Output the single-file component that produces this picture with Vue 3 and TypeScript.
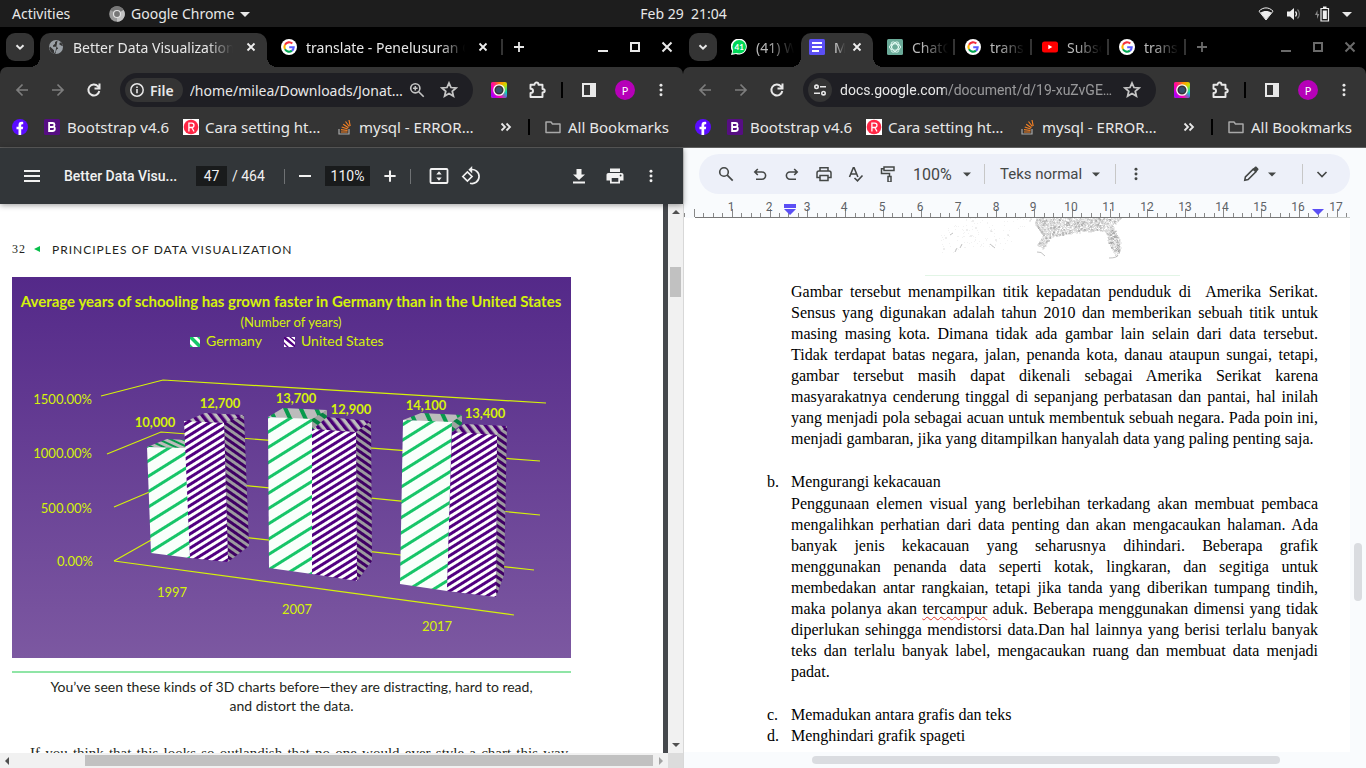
<script setup lang="ts">
interface Tab {
  title: string
  icon: string
  width: number
  kind: 'active' | 'first' | 'plain'
  closable?: boolean
  divider?: boolean
}
interface BrowserWindow {
  id: string
  focused: boolean
  tabs: Tab[]
  chip: string
  url: string
}

const windows: BrowserWindow[] = [
  {
    id: 'pdf',
    focused: true,
    chip: 'File',
    url: '/home/milea/Downloads/Jonat…',
    tabs: [
      { title: 'Better Data Visualizations', icon: 'globe', width: 227, kind: 'active', closable: true },
      { title: 'translate - Penelusuran Google', icon: 'google', width: 236, kind: 'first', closable: true, divider: true },
    ],
  },
  {
    id: 'docs',
    focused: false,
    chip: '',
    url: 'docs.google.com/document/d/19-xuZvGE…',
    tabs: [
      { title: '(41) WhatsApp', icon: 'whatsapp', width: 84, kind: 'first' },
      { title: 'Makalah', icon: 'gdocs', width: 72, kind: 'active', closable: true },
      { title: 'ChatGPT', icon: 'chatgpt', width: 82, kind: 'first', divider: true },
      { title: 'translate', icon: 'google', width: 77, kind: 'plain', divider: true },
      { title: 'Subscriptions', icon: 'youtube', width: 77, kind: 'plain', divider: true },
      { title: 'translate', icon: 'google', width: 77, kind: 'plain', divider: true },
    ],
  },
]

const bookmarks = [
  { id: 'fb', icon: 'facebook', label: '' },
  { id: 'bs', icon: 'bootstrap', label: 'Bootstrap v4.6' },
  { id: 'cara', icon: 'redr', label: 'Cara setting ht…' },
  { id: 'so', icon: 'stack', label: 'mysql - ERROR…' },
]

const gridLines = [
  '101,396 163,380 546,403',
  '107,454 161,432 540,461',
  '114,507 180,479 540,515',
  '114,561 160,535 180,530 534,570',
  '114,561 514,615',
]

const faces = [
  { p: '147,447 167,439 187,440 187,449', f: 'green-flat' },
  { p: '147,447 186,448 190,558 151,553', f: 'green-front' },
  { p: '184,422 205,413 244,415 224,424', f: 'purple-top' },
  { p: '224,423 244,415 249,546 228,562', f: 'purple-side' },
  { p: '184,421 224,423 228,562 190,558', f: 'purple-front' },
  { p: '268,417 283,408 327,410 312,420', f: 'green-top' },
  { p: '268,417 312,419 312,574 269,568', f: 'green-front' },
  { p: '312,430 326,417 371,421 356,433', f: 'purple-top' },
  { p: '312,419 327,410 327,417 312,430', f: 'green-side' },
  { p: '356,432 371,421 372,561 357,581', f: 'purple-side' },
  { p: '312,429 356,432 357,581 312,574', f: 'purple-front' },
  { p: '403,420 421,413 462,415 452,423', f: 'green-top' },
  { p: '403,420 452,422 447,591 400,584', f: 'green-front' },
  { p: '452,433 464,424 507,426 497,436', f: 'purple-top' },
  { p: '452,422 462,415 462,424 452,432', f: 'green-side' },
  { p: '497,434 507,426 504,575 496,597', f: 'purple-side' },
  { p: '452,432 497,435 496,597 447,591', f: 'purple-front' },
]

const axisLabels = [
  { x: 92, y: 404, t: '1500.00%' },
  { x: 92, y: 458, t: '1000.00%' },
  { x: 92, y: 513, t: '500.00%' },
  { x: 93, y: 566, t: '0.00%' },
]
const yearLabels = [
  { x: 172, y: 597, t: '1997' },
  { x: 297, y: 614, t: '2007' },
  { x: 437, y: 631, t: '2017' },
]
const valueLabels = [
  { x: 155, y: 427, t: '10,000' },
  { x: 220, y: 408, t: '12,700' },
  { x: 296, y: 403, t: '13,700' },
  { x: 351, y: 414, t: '12,900' },
  { x: 426, y: 410, t: '14,100' },
  { x: 485, y: 418, t: '13,400' },
]

const unit = 37.8
const rulerTicks = Array.from({ length: 72 }, (_, i) => {
  const x = Math.round(-9 + (i * unit) / 4)
  return { x, top: i % 4 === 2 ? 9 : 13 }
}).filter((t) => t.x >= 0)
const rulerNumbers = Array.from({ length: 17 }, (_, i) => ({ n: i + 1, x: Math.round(47 + i * unit) }))

/* Population dot map: dots are scattered inside a few outlines, in layers that darken where they meet. */
type Pt = [number, number]
let seed = 11
function rand(): number {
  seed = (seed + 0x6d2b79f5) | 0
  let t = Math.imul(seed ^ (seed >>> 15), 1 | seed)
  t = (t + Math.imul(t ^ (t >>> 7), 61 | t)) ^ t
  return ((t ^ (t >>> 14)) >>> 0) / 4294967296
}
function inside(x: number, y: number, poly: Pt[]): boolean {
  let hit = false
  for (let i = 0, j = poly.length - 1; i < poly.length; j = i++) {
    const [xi, yi] = poly[i]
    const [xj, yj] = poly[j]
    if (yi > y !== yj > y && x < ((xj - xi) * (y - yi)) / (yj - yi) + xi) hit = !hit
  }
  return hit
}
function scatter(poly: Pt[], count: number, size: number): string {
  let d = ''
  for (let i = 0; i < count; i++) {
    const x = rand() * 255
    const y = rand() * 44
    if (inside(x, y, poly)) d += `M${Math.floor(x)} ${Math.floor(y)}h${size}v${size}h-${size}z`
  }
  return d
}
const gulf: Pt[] = [[112, 0], [198, 0], [188, 7], [195, 22], [196, 34], [191, 38], [184, 26], [180, 13], [155, 14], [140, 17], [126, 19], [119, 31], [112, 28], [118, 18], [110, 6]]
const florida: Pt[] = [[184, 8], [190, 10], [196, 26], [195, 36], [190, 32], [184, 22]]
const west: Pt[] = [[35, 0], [110, 0], [100, 10], [80, 34], [50, 28], [15, 40], [10, 22]]
const dots = [
  { d: scatter(gulf, 14000, 1), o: 0.09 },
  { d: scatter(gulf, 3000, 2), o: 0.08 },
  { d: scatter(gulf, 4000, 1), o: 0.1 },
  { d: scatter(gulf, 500, 2), o: 0.16 },
  { d: scatter(florida, 2500, 2), o: 0.08 },
  { d: scatter(florida, 2000, 1), o: 0.14 },
  { d: scatter(west, 500, 1), o: 0.06 },
  { d: scatter(west, 50, 2), o: 0.08 },
]
</script>

<template>
  <div class="desktop">
    <svg class="sprite" aria-hidden="true">
      <defs>
        <linearGradient id="rainbow" x1="0" y1="0" x2="1" y2="1">
          <stop offset="0" stop-color="#ff2a3c" /><stop offset=".35" stop-color="#ff9a00" />
          <stop offset=".55" stop-color="#c8e000" /><stop offset=".8" stop-color="#00d8c0" /><stop offset="1" stop-color="#2a80ff" />
        </linearGradient>
        <linearGradient id="magenta" x1="0" y1=".8" x2=".7" y2=".3">
          <stop offset="0" stop-color="#a000ff" /><stop offset=".45" stop-color="#ff00b0" /><stop offset="1" stop-color="#ff00b0" stop-opacity="0" />
        </linearGradient>
      </defs>
      <symbol id="chevron" viewBox="0 0 16 16"><path d="M4.500 6.200 8 9.700l3.500-3.500" fill="none" stroke="currentColor" stroke-width="2" /></symbol>
      <symbol id="chevron-thin" viewBox="0 0 16 16"><path d="m3.500 6 4.500 4.500L12.500 6" fill="none" stroke="currentColor" stroke-width="1.600" /></symbol>
      <symbol id="close" viewBox="0 0 16 16"><path d="m4.500 4.500 7 7m0-7-7 7" fill="none" stroke="currentColor" stroke-width="1.800" /></symbol>
      <symbol id="wclose" viewBox="0 0 16 16"><path d="m3.500 3.500 9 9m0-9-9 9" fill="none" stroke="currentColor" stroke-width="2" /></symbol>
      <symbol id="plus" viewBox="0 0 16 16"><path d="M8 3v10M3 8h10" stroke="currentColor" stroke-width="1.800" /></symbol>
      <symbol id="wmin" viewBox="0 0 16 16"><path d="M3 12h10" stroke="currentColor" stroke-width="2" /></symbol>
      <symbol id="wmax" viewBox="0 0 16 16"><path d="M4 4h8v8H4z" fill="none" stroke="currentColor" stroke-width="2" /></symbol>
      <symbol id="back" viewBox="0 0 16 16"><path d="M14 8H3m5.500-5.500L3 8l5.500 5.500" fill="none" stroke="currentColor" stroke-width="1.700" /></symbol>
      <symbol id="forward" viewBox="0 0 16 16"><path d="M2 8h11M7.500 2.500 13 8l-5.500 5.500" fill="none" stroke="currentColor" stroke-width="1.700" /></symbol>
      <symbol id="reload" viewBox="0 0 16 16"><path d="M13.300 9A5.500 5.500 0 1 1 12 4.300l1.300 1.400M13.500 1.500v5h-5" fill="none" stroke="currentColor" stroke-width="2" /></symbol>
      <symbol id="info" viewBox="0 0 16 16"><circle cx="8" cy="8" r="6.200" fill="none" stroke="currentColor" stroke-width="1.500" /><path d="M8 7v4.200M8 4.500v1.600" stroke="currentColor" stroke-width="1.600" /></symbol>
      <symbol id="tune" viewBox="0 0 16 16"><g fill="none" stroke="currentColor" stroke-width="1.600"><circle cx="4.500" cy="4.800" r="1.700" /><path d="M8 4.800h6M2 11.200h6" /><circle cx="11.500" cy="11.200" r="1.700" /></g></symbol>
      <symbol id="zoomin" viewBox="0 0 16 16"><g fill="none" stroke="currentColor" stroke-width="1.600"><circle cx="6.300" cy="6.300" r="4.600" /><path d="m9.700 9.700 5 5M6.300 4v4.600M4 6.300h4.600" /></g></symbol>
      <symbol id="star" viewBox="0 0 16 16"><path d="m8 1.800 1.800 4 4.400.4-3.300 2.900 1 4.300L8 11.100l-3.900 2.300 1-4.300-3.300-2.900 4.400-.4z" fill="none" stroke="currentColor" stroke-width="1.600" /></symbol>
      <symbol id="camera" viewBox="0 0 16 16"><rect width="16" height="16" rx="2" fill="url(#rainbow)" /><rect width="16" height="16" rx="2" fill="url(#magenta)" /><circle cx="8" cy="8" r="5.200" fill="#343434" stroke="#fff" stroke-width="1.300" /><circle cx="8" cy="8" r="3" fill="#34506b" /></symbol>
      <symbol id="puzzle" viewBox="0 0 18 18"><path d="M2.500 3.800h4C6.500.800 10.500.800 10.500 3.800h4v4.200c3 0 3 3.500 0 3.500V16h-12v-4c3.400 0 3.400-4.200 0-4.200z" fill="none" stroke="currentColor" stroke-width="1.900" stroke-linejoin="round" /></symbol>
      <symbol id="panel" viewBox="0 0 16 16"><path d="M2 2h12v12H2z" fill="none" stroke="currentColor" stroke-width="2" /><path d="M9 1h6v14H9z" fill="currentColor" /></symbol>
      <symbol id="dots" viewBox="0 0 16 16"><g fill="currentColor"><circle cx="8" cy="2.600" r="1.700" /><circle cx="8" cy="8" r="1.700" /><circle cx="8" cy="13.400" r="1.700" /></g></symbol>
      <symbol id="folder" viewBox="0 0 16 16"><path d="M1 3h5l1.500 2H15v8.500H1z" fill="none" stroke="currentColor" stroke-width="1.500" stroke-linejoin="round" /></symbol>
      <symbol id="more" viewBox="0 0 16 16"><path d="m3.500 4.500 3.500 3.500-3.500 3.500m5-7L12 8l-3.500 3.500" fill="none" stroke="currentColor" stroke-width="1.800" /></symbol>
      <symbol id="globe" viewBox="0 0 16 16"><circle cx="8" cy="8" r="7" fill="#9aa0a6" /><path d="M9.500 1.500 7 3v1.800L5 6.500v1.300h4l1.200 2.200H9l-1 2v2.500L6 13.500v-2.300L2 7.500l-.7 1.500C2 12.500 4 14.300 7 15M12 3.200l-.8 2 2.300 1.600 1.300.2-.8-2.500z" fill="#343434" /></symbol>
      <symbol id="google" viewBox="0 0 16 16"><circle cx="8" cy="8" r="8" fill="#fff" /><g fill="none" stroke-width="2.100"><path d="M4 5.700A4.700 4.700 0 0 1 11.300 4.600" stroke="#f4303e" /><path d="M4 5.700a4.700 4.700 0 0 0 0 4.600" stroke="#ffb400" /><path d="M4 10.300a4.700 4.700 0 0 0 7 1.400" stroke="#00a650" /><path d="M11 11.700A4.500 4.500 0 0 0 12.700 8.300H8.200" stroke="#5a5cff" /></g></symbol>
      <symbol id="whatsapp" viewBox="0 0 16 16"><path d="M0 16 1.200 12A8 8 0 1 1 5 15z" fill="#fff" /><circle cx="8.200" cy="7.800" r="6.800" fill="#00d757" /><path d="M1.500 14.500 2.400 10 6 14z" fill="#00d757" /><text x="8.200" y="10.800" text-anchor="middle" font-size="8" font-weight="700" font-family="Lato, sans-serif" fill="#fff">41</text></symbol>
      <symbol id="gdocs" viewBox="0 0 16 16"><rect width="16" height="16" rx="1.500" fill="#5b4ff5" /><path d="M3 4h10M3 8h10M3 12h7" stroke="#fff" stroke-width="1.900" /></symbol>
      <symbol id="chatgpt" viewBox="0 0 16 16"><rect width="16" height="16" rx="1.500" fill="#6aaa98" /><g fill="none" stroke="#e9fff8" stroke-width=".9"><ellipse cx="8" cy="8" rx="5.600" ry="3.200" /><ellipse cx="8" cy="8" rx="5.600" ry="3.200" transform="rotate(60 8 8)" /><ellipse cx="8" cy="8" rx="5.600" ry="3.200" transform="rotate(120 8 8)" /></g></symbol>
      <symbol id="youtube" viewBox="0 0 16 16"><rect y="2.500" width="16" height="11" rx="2.500" fill="#f00" /><path d="m6.300 5.800 4 2.200-4 2.200z" fill="#fff" /></symbol>
      <symbol id="facebook" viewBox="0 0 16 16"><circle cx="8" cy="8" r="8" fill="#5a0cff" /><path d="M6.500 16V10.300H4.500V7.700h2V6.200c0-2.700 1.500-3.800 4.700-3.300v2.300c-1.500-.1-2 .1-2 1.300v1.200h2l-.4 2.600H9.200V16z" fill="#fff" /></symbol>
      <symbol id="bootstrap" viewBox="0 0 16 16"><rect width="16" height="16" rx="1.500" fill="#560e83" /><path d="M5.100 4h3.500c2.400 0 2.500 3.200.6 3.700 2.300.6 2.200 4.300-.7 4.300H5.100zM6 8h3" fill="none" stroke="#fff" stroke-width="1.800" /></symbol>
      <symbol id="redr" viewBox="0 0 16 16"><rect width="16" height="16" fill="#fff" /><circle cx="8" cy="8" r="7.300" fill="#ff2645" /><path d="M5.900 12.500V4.200h2.900c2.900 0 2.900 4.300 0 4.300H6m3 .2 2 3.800" fill="none" stroke="#fff" stroke-width="1.300" /></symbol>
      <symbol id="stack" viewBox="0 0 16 16"><g fill="none" stroke-width="1.200"><path d="M2 10v5h10v-5" stroke="#aaa" /><path d="M4 13h6.500M4 10.700l6.500.8M4.700 8l6 2M6.200 5.200l5.200 3.500M8.500 2.500l3.800 5M12 1l1.200 6" stroke="#f48024" /></g></symbol>
      <symbol id="caret" viewBox="0 0 10 10"><path d="M0 3h10L5 8z" fill="currentColor" /></symbol>
      <symbol id="fit" viewBox="0 0 20 20"><rect x="1.500" y="3" width="17" height="14" rx="1" fill="none" stroke="currentColor" stroke-width="1.800" /><path d="m10 5.200 2.700 3.300H7.300zM10 14.800l2.700-3.300H7.300z" fill="currentColor" /></symbol>
      <symbol id="rotate" viewBox="0 0 20 20"><path d="m1.800 10.500 4.600-4.600 4.600 4.600-4.600 4.600z" fill="none" stroke="currentColor" stroke-width="1.700" /><path d="M9.500 3.700a7 7 0 1 1-.5 13.500" fill="none" stroke="currentColor" stroke-width="1.700" /><path d="M11.200 0v7.400L7.400 3.700z" fill="currentColor" /></symbol>
      <symbol id="download" viewBox="0 0 16 16"><path d="M5.500 1h5v5.500H14L8 12 2 6.500h3.500zM2 13.600h12v1.900H2z" fill="currentColor" /></symbol>
      <symbol id="print" viewBox="0 0 18 18"><path d="M4 1.500h10V5H4zM2.500 6h13c1.300 0 2 .8 2 2v5.500H14v3H4v-3H.5V8c0-1.200.7-2 2-2z" fill="currentColor" /><path d="M5.700 11h6.600v3.800H5.700z" fill="#323639" /><circle cx="14.600" cy="8.500" r=".9" fill="#323639" /></symbol>
      <symbol id="search" viewBox="0 0 16 16"><circle cx="6" cy="6" r="4.300" fill="none" stroke="currentColor" stroke-width="1.600" /><path d="m9.200 9.200 5.500 5.500" stroke="currentColor" stroke-width="1.700" /></symbol>
      <symbol id="undo" viewBox="0 0 16 16"><path d="M5.800 3 2.800 6l3 3M3 6h7a3.600 3.600 0 0 1 0 7.200H4" fill="none" stroke="currentColor" stroke-width="1.600" /></symbol>
      <symbol id="redo" viewBox="0 0 16 16"><path d="m10.200 3 3 3-3 3M13 6H6a3.600 3.600 0 0 0 0 7.200h6" fill="none" stroke="currentColor" stroke-width="1.600" /></symbol>
      <symbol id="printer" viewBox="0 0 16 16"><g fill="none" stroke="currentColor" stroke-width="1.500"><path d="M4 5V1.800h8V5M4 11.500H1V7c0-1.300.7-2 2-2h10c1.300 0 2 .7 2 2v4.500h-3" /><path d="M4 9.500h8v5H4z" /></g></symbol>
      <symbol id="spell" viewBox="0 0 16 16"><path d="M1.500 11 5.300 1.800h.8L9.900 11M3 8h5.400M6.500 12l3 2.800 5-5.300" fill="none" stroke="currentColor" stroke-width="1.600" /></symbol>
      <symbol id="paint" viewBox="0 0 16 16"><g fill="none" stroke="currentColor" stroke-width="1.500"><path d="M4 1h10v3.600H4zM4 2.700H1.500V7.500H9.500v2.700" /><path d="M8 10.500h3V16H8z" /></g></symbol>
      <symbol id="pencil" viewBox="0 0 16 16"><path d="m1.800 14.200.6-3.300 7.800-7.800 2.700 2.700-7.800 7.800z" fill="none" stroke="currentColor" stroke-width="1.600" /><path d="m9.800 3 2.200-2.200c.5-.5 1-.5 1.500 0l1.700 1.700c.5.5.5 1 0 1.500L13 6.200z" fill="currentColor" /></symbol>
    </svg>

    <header class="topbar">
      <button class="top-item">Activities</button>
      <button class="top-item app">
        <svg class="i16" viewBox="0 0 16 16"><circle cx="8" cy="8" r="7.800" fill="#9a9a9a" /><path d="M8 8 1.300 4A7.800 7.800 0 0 1 14.700 4z" fill="#787878" /><path d="M8 8 14.700 4A7.800 7.800 0 0 1 8 15.800z" fill="#c2c2c2" /><circle cx="8" cy="8" r="3.500" fill="#777" stroke="#e4e4e4" stroke-width="1.200" /></svg>
        Google Chrome
        <svg class="i10"><use href="#caret" /></svg>
      </button>
      <button class="top-item clock">Feb 29&nbsp; 21:04</button>
      <button class="status" aria-label="System menu">
        <svg width="16" height="14" viewBox="0 0 16 14"><path d="M1 4.200C5-.2 11-.2 15 4.200L8 13z" fill="none" stroke="#eee" stroke-width="1" /><path d="M2.500 5.800c3-2.500 8-2.500 11 0L8 12.800z" fill="#eee" /></svg>
        <svg width="16" height="14" viewBox="0 0 16 14"><path d="M1 4.500h3L8 1v12L4 9.500H1z" fill="#eee" /><path d="M9.500 4.500c1.300 1.500 1.300 3.500 0 5" fill="none" stroke="#eee" stroke-width="1.200" /><path d="M11.500 2.500c2.500 2.500 2.500 6.500 0 9" fill="none" stroke="#777" stroke-width="1.200" /></svg>
        <svg width="16" height="16" viewBox="0 0 16 16"><path d="M3.500 4 1 9h2v4l2.300-5H3.500z" fill="#888" /><path d="M7 2.500h7.500V15H7z" fill="none" stroke="#eee" stroke-width="1.200" /><path d="M8.800 4.500h4V13h-4zM9 .500h3.500V2H9z" fill="#eee" /></svg>
        <svg class="i10"><use href="#caret" /></svg>
      </button>
    </header>

    <main class="windows">
      <section v-for="w in windows" :key="w.id" class="window" :class="{ blurred: !w.focused }">
        <div class="tabstrip">
          <button class="tab-search" aria-label="Search tabs"><svg class="i16"><use href="#chevron" /></svg></button>
          <div v-for="(t, i) in w.tabs" :key="i" class="tab" :class="[t.kind, { narrow: t.width < 75 }]" :style="{ width: t.width + 'px' }">
            <svg class="i16"><use :href="'#' + t.icon" /></svg>
            <span class="tab-title">{{ t.title }}</span>
            <button v-if="t.closable" class="tab-close" aria-label="Close tab"><svg class="i16"><use href="#close" /></svg></button>
            <i v-if="t.divider" class="tab-divider"></i>
          </div>
          <button class="new-tab" aria-label="New tab"><svg class="i16"><use href="#plus" /></svg></button>
          <div class="win-buttons">
            <button aria-label="Minimise"><svg class="i16"><use href="#wmin" /></svg></button>
            <button aria-label="Maximise"><svg class="i16"><use href="#wmax" /></svg></button>
            <button aria-label="Close"><svg class="i16"><use href="#wclose" /></svg></button>
          </div>
        </div>

        <div class="chrome">
          <div class="navbar">
            <button class="nav dim" aria-label="Back"><svg class="i16"><use href="#back" /></svg></button>
            <button class="nav dim" aria-label="Forward"><svg class="i16"><use href="#forward" /></svg></button>
            <button class="nav" aria-label="Reload"><svg class="i16"><use href="#reload" /></svg></button>
            <div class="omnibox">
              <button class="chip" :class="{ round: !w.chip }" aria-label="Site information">
                <svg class="i16"><use :href="w.chip ? '#info' : '#tune'" /></svg><span v-if="w.chip">{{ w.chip }}</span>
              </button>
              <input class="url" :class="{ website: !w.chip }" type="text" aria-label="Address" :value="w.url" />
              <button v-if="w.focused" class="box-btn" aria-label="Zoom"><svg class="i16"><use href="#zoomin" /></svg></button>
              <button class="box-btn star" aria-label="Bookmark this page"><svg class="i18"><use href="#star" /></svg></button>
            </div>
            <div class="actions">
              <button aria-label="Screenshot extension"><svg class="i16"><use href="#camera" /></svg></button>
              <button class="ext" aria-label="Extensions"><svg class="i18"><use href="#puzzle" /></svg></button>
              <i class="bar"></i>
              <button aria-label="Side panel"><svg class="i16"><use href="#panel" /></svg></button>
              <button class="avatar" aria-label="Profile">P</button>
              <button aria-label="Menu"><svg class="i14"><use href="#dots" /></svg></button>
            </div>
          </div>
          <nav class="bookmarks">
            <a v-for="b in bookmarks" :key="b.id" class="bm" :class="b.id" href="#" :aria-label="b.label || 'Facebook'"><svg class="i16"><use :href="'#' + b.icon" /></svg><span v-if="b.label">{{ b.label }}</span></a>
            <button class="bm overflow" aria-label="More bookmarks"><svg class="i16"><use href="#more" /></svg></button>
            <i class="bar"></i>
            <button class="bm all"><svg class="i16"><use href="#folder" /></svg><span>All Bookmarks</span></button>
          </nav>
        </div>

        <div v-if="w.id === 'pdf'" class="pdf">
          <div class="pdf-bar">
            <button class="menu" aria-label="Menu"><i></i><i></i><i></i></button>
            <span class="pdf-title">Better Data Visu...</span>
            <input class="pdf-input page-no" type="text" value="47" aria-label="Page" />
            <span class="pages">/ 464</span>
            <i class="pdf-sep"></i>
            <button class="pdf-btn out" aria-label="Zoom out"><i class="minus"></i></button>
            <input class="pdf-input zoom" type="text" value="110%" aria-label="Zoom level" />
            <button class="pdf-btn" aria-label="Zoom in"><svg class="i18"><use href="#plus" /></svg></button>
            <i class="pdf-sep"></i>
            <button class="pdf-btn fit" aria-label="Fit to page"><svg class="i20"><use href="#fit" /></svg></button>
            <button class="pdf-btn" aria-label="Rotate"><svg class="i20"><use href="#rotate" /></svg></button>
            <div class="pdf-right">
              <button class="pdf-btn" aria-label="Download"><svg class="i16"><use href="#download" /></svg></button>
              <button class="pdf-btn" aria-label="Print"><svg class="i18"><use href="#print" /></svg></button>
              <button class="pdf-btn" aria-label="More"><svg class="i14"><use href="#dots" /></svg></button>
            </div>
          </div>
          <div class="pdf-view">
            <article class="sheet">
              <div class="running"><span class="folio">32</span><i class="tri"></i><span class="chapter">PRINCIPLES OF DATA VISUALIZATION</span></div>
              <svg class="chart" viewBox="12 277 559 381" role="img" aria-label="Average years of schooling">
                <defs>
                  <linearGradient id="panelbg" x1="0" y1="0" x2="0" y2="1"><stop offset="0" stop-color="#542989" /><stop offset="1" stop-color="#7c58a1" /></linearGradient>
                  <pattern id="green-front" width="20" height="13" patternUnits="userSpaceOnUse" patternTransform="rotate(-32)"><rect width="20" height="13" fill="#f9fffb" /><rect width="20" height="3" fill="#17c568" /></pattern>
                  <pattern id="green-flat" width="20" height="5" patternUnits="userSpaceOnUse" patternTransform="rotate(25)"><rect width="20" height="5" fill="#bcbcbc" /><rect width="20" height="2" fill="#079a4c" /></pattern>
                  <pattern id="green-top" width="14" height="20" patternUnits="userSpaceOnUse" patternTransform="rotate(-25)"><rect width="14" height="20" fill="#bcbcbc" /><rect width="4" height="20" fill="#079a4c" /></pattern>
                  <pattern id="green-side" width="20" height="9" patternUnits="userSpaceOnUse" patternTransform="rotate(35)"><rect width="20" height="9" fill="#9fa3a0" /><rect width="20" height="4" fill="#078344" /></pattern>
                  <pattern id="purple-front" width="20" height="6" patternUnits="userSpaceOnUse" patternTransform="rotate(-32)"><rect width="20" height="6" fill="#fff" /><rect width="20" height="3" fill="#510080" /></pattern>
                  <pattern id="purple-top" width="7" height="20" patternUnits="userSpaceOnUse" patternTransform="rotate(-38)"><rect width="7" height="20" fill="#bdbdbd" /><rect width="3.500" height="20" fill="#490075" /></pattern>
                  <pattern id="purple-side" width="20" height="6" patternUnits="userSpaceOnUse" patternTransform="rotate(35)"><rect width="20" height="6" fill="#9c9a9f" /><rect width="20" height="3" fill="#3f0064" /></pattern>
                </defs>
                <rect x="12" y="277" width="559" height="381" fill="url(#panelbg)" />
                <polyline v-for="g in gridLines" :key="g" :points="g" fill="none" stroke="#d5f20a" stroke-width="1.200" />
                <polygon v-for="(f, i) in faces" :key="i" :points="f.p" :fill="`url(#${f.f})`" />
                <g class="ct">
                  <text class="head" x="291" y="307" text-anchor="middle">Average years of schooling has grown faster in Germany than in the United States</text>
                  <text x="291" y="327" text-anchor="middle">(Number of years)</text>
                  <text class="legend" x="206" y="346">Germany</text>
                  <text class="legend" x="301" y="346">United States</text>
                  <text v-for="l in axisLabels" :key="l.t" :x="l.x" :y="l.y" text-anchor="end">{{ l.t }}</text>
                  <text v-for="l in yearLabels" :key="l.t" :x="l.x" :y="l.y" text-anchor="middle">{{ l.t }}</text>
                  <text v-for="l in valueLabels" :key="l.t" class="val" :x="l.x" :y="l.y" text-anchor="middle">{{ l.t }}</text>
                </g>
                <path d="M190 337h10v10h-10z" fill="#fff" /><path d="M190 337h3l7 7v3h-2l-8-8zM197 337h3v3zM190 344v3h3z" fill="#17c568" />
                <path d="M284 337h11v10h-11z" fill="#fff" /><path d="M284 337h2l9 8v2h-1l-10-8zM289 337h2l4 3v2zM284 342v2l3 3h2z" fill="#510080" />
              </svg>
              <p class="caption">You’ve seen these kinds of 3D charts before—they are distracting, hard to read,<br />and distort the data.</p>
              <p class="body">If you think that this looks so outlandish that no one would ever style a chart this way,</p>
            </article>
            <div class="vscroll"><i class="up"></i><i class="vthumb"></i><i class="down"></i></div>
          </div>
          <div class="hscroll"><i class="left"></i><i class="hthumb"></i><i class="right"></i><i class="corner"></i></div>
        </div>

        <div v-else class="docs">
          <div class="doc-bar">
            <button class="d search" aria-label="Search menus"><svg class="i16"><use href="#search" /></svg></button>
            <button class="d" aria-label="Undo"><svg class="i16"><use href="#undo" /></svg></button>
            <button class="d" aria-label="Redo"><svg class="i16"><use href="#redo" /></svg></button>
            <button class="d" aria-label="Print"><svg class="i16"><use href="#printer" /></svg></button>
            <button class="d" aria-label="Spelling"><svg class="i16"><use href="#spell" /></svg></button>
            <button class="d" aria-label="Paint format"><svg class="i16"><use href="#paint" /></svg></button>
            <input class="doc-zoom" type="text" value="100%" aria-label="Zoom" />
            <button class="d small" aria-label="Zoom options"><svg class="i8"><use href="#caret" /></svg></button>
            <i class="doc-sep"></i>
            <button class="styles">Teks normal<svg class="i8"><use href="#caret" /></svg></button>
            <i class="doc-sep"></i>
            <button class="d dd" aria-label="More"><svg class="i14"><use href="#dots" /></svg></button>
            <div class="doc-right">
              <button class="mode" aria-label="Editing mode"><svg class="i16"><use href="#pencil" /></svg><svg class="i8"><use href="#caret" /></svg></button>
              <i class="doc-sep"></i>
              <button class="d" aria-label="Hide menus"><svg class="i16"><use href="#chevron-thin" /></svg></button>
            </div>
          </div>
          <svg class="ruler" width="682" height="20" viewBox="0 0 682 20" aria-hidden="true">
            <rect x="11" y="17" width="623" height="1" fill="#777" /><rect x="634" y="17" width="32" height="1" fill="#c4c7c5" />
            <rect v-for="t in rulerTicks" :key="t.x" :x="t.x" :y="t.top" width="1" :height="17 - t.top" fill="#888" />
            <text v-for="r in rulerNumbers" :key="r.n" :x="r.x" y="11" text-anchor="middle">{{ r.n }}</text>
            <path d="M100 4h12v4h-12zM100 9h12l-6 6zM628 9h12l-6 6z" fill="#5b4ff5" />
          </svg>
          <div class="doc-view">
            <article class="doc-page">
              <svg class="map" width="255" height="58" viewBox="0 0 255 58" role="img" aria-label="Peta kepadatan penduduk">
                <path v-for="(p, i) in dots" :key="i" :d="p.d" fill="#222" :fill-opacity="p.o" />
                <path d="M112 34q4-1 8 4M184 40q8 0 9-3M25 17l3-2M35 30l2-4M65 26l5 4M30 34l2-4" fill="none" stroke="#666" stroke-opacity=".4" />
                <rect y="57" width="255" height="1" fill="#e2f5e6" />
              </svg>
              <p class="para">Gambar tersebut menampilkan titik kepadatan penduduk di&nbsp; Amerika Serikat. Sensus yang digunakan adalah tahun 2010 dan memberikan sebuah titik untuk masing masing kota. Dimana tidak ada gambar lain selain dari data tersebut. Tidak terdapat batas negara, jalan, penanda kota, danau ataupun sungai, tetapi, gambar tersebut masih dapat dikenali sebagai Amerika Serikat karena masyarakatnya cenderung tinggal di sepanjang perbatasan dan pantai, hal inilah yang menjadi pola sebagai acuan untuk membentuk sebuah negara. Pada poin ini, menjadi gambaran, jika yang ditampilkan hanyalah data yang paling penting saja.</p>
              <div class="item gap"><span class="mark">b.</span><span>Mengurangi kekacauan</span></div>
              <p class="para">Penggunaan elemen visual yang berlebihan terkadang akan membuat pembaca mengalihkan perhatian dari data penting dan akan mengacaukan halaman. Ada banyak jenis kekacauan yang seharusnya dihindari. Beberapa grafik menggunakan penanda data seperti kotak, lingkaran, dan segitiga untuk membedakan antar rangkaian, tetapi jika tanda yang diberikan tumpang tindih, maka polanya akan <span class="typo">tercampur</span> aduk. Beberapa menggunakan dimensi yang tidak diperlukan sehingga mendistorsi data.Dan hal lainnya yang berisi terlalu banyak teks dan terlalu banyak label, mengacaukan ruang dan membuat data menjadi padat.</p>
              <div class="item gap"><span class="mark">c.</span><span>Memadukan antara grafis dan teks</span></div>
              <div class="item"><span class="mark">d.</span><span>Menghindari grafik spageti</span></div>
            </article>
            <div class="doc-gutter"><i></i></div>
          </div>
          <div class="doc-hscroll"><i></i></div>
        </div>
      </section>
    </main>
  </div>
</template>

<style>
html, body { margin: 0; overflow: hidden; background: #000; }
</style>

<style scoped>
.desktop { display: flex; flex-direction: column; height: 100vh; font-family: "Noto Sans", "Open Sans", sans-serif; font-size: 14px; color: #e8e8e8; }
.desktop *, .desktop *::before, .desktop *::after { box-sizing: border-box; }
button { padding: 0; border: 0; background: none; color: inherit; font: inherit; display: inline-flex; align-items: center; justify-content: center; flex: none; }
input { padding: 0; border: 0; background: none; color: inherit; font: inherit; min-width: 0; outline: 0; }
a { color: inherit; text-decoration: none; }
i { display: block; flex: none; }
svg { display: block; flex: none; }
.sprite { position: absolute; width: 0; height: 0; }
.i8 { width: 8px; height: 8px; }
.i10 { width: 10px; height: 10px; }
.i14 { width: 14px; height: 14px; }
.i16 { width: 16px; height: 16px; }
.i18 { width: 18px; height: 18px; }
.i20 { width: 20px; height: 20px; }

.topbar { display: grid; grid-template-columns: 97px 1fr auto 1fr; align-items: center; height: 27px; flex: none; background: #1d1d1d; padding: 0 14px 0 12px; white-space: nowrap; }
.top-item { justify-self: start; gap: 6px; }
.clock { margin-right: 94px; }
.status { justify-self: end; gap: 12px; }

.windows { display: grid; grid-template-columns: 1fr 1fr; flex: 1; min-height: 0; }
.window { display: flex; flex-direction: column; min-width: 0; min-height: 0; background: #000; }
.tabstrip { display: flex; align-items: center; height: 40px; flex: none; padding-left: 6px; }
.tab-search { width: 28px; height: 28px; border-radius: 9px; background: #343434; }
.tab { position: relative; display: flex; align-items: center; height: 34px; flex: none; align-self: flex-end; padding: 0 7px 6px 8px; gap: 9px; }
.tab.first { padding-left: 14px; }
.tab.plain { padding-left: 10px; }
.tab-search + .tab.active { margin-left: 6px; }
.tab.active { background: #343434; border-radius: 10px 10px 0 0; }
.tab.active::before, .tab.active::after { content: ""; position: absolute; bottom: 0; width: 10px; height: 10px; }
.tab.active::before { left: -10px; background: radial-gradient(circle at 0 0, transparent 10px, #343434 10px); }
.tab.active::after { right: -10px; background: radial-gradient(circle at 100% 0, transparent 10px, #343434 10px); }
.tab-title { flex: 1; min-width: 0; overflow: hidden; white-space: nowrap; mask-image: linear-gradient(90deg, #000 calc(100% - 26px), transparent); }
.tab.narrow { gap: 7px; }
.tab.narrow .tab-title { margin: 0 -4px 0 2px; mask-image: linear-gradient(90deg, #000, transparent); }
.blurred .tab { color: #b9b9b9; }
.blurred .tab.active { color: #eee; }
.tab-close { width: 18px; color: #eee; }
.tab.first .tab-close { margin-right: 4px; }
.tab-divider { position: absolute; right: 0; top: 6px; width: 2px; height: 16px; background: #343434; }
.new-tab { width: 32px; }
.blurred .new-tab, .blurred .win-buttons { color: #6a6a6a; }
.win-buttons { display: flex; gap: 16px; margin-left: auto; padding-right: 8px; }

.chrome { background: #343434; border-radius: 7px 7px 0 0; border-bottom: 1px solid #606060; flex: none; height: 81px; }
.navbar { display: flex; align-items: center; height: 46px; padding: 0 13px 0 14px; }
.nav { width: 16px; margin-right: 20px; }
.nav.dim { color: #7d7d7d; }
.nav:nth-child(3) { margin-right: 18px; }
.omnibox { display: flex; align-items: center; flex: 1; min-width: 0; height: 34px; border-radius: 17px; background: #1f1f24; padding: 0 15px 0 5px; }
.chip { height: 24px; padding: 0 9px 0 4px; gap: 5px; border-radius: 12px; background: #343434; font-weight: 600; }
.chip.round { width: 24px; padding: 0; }
.url { flex: 1; margin-left: 7px; }
.url.website { margin-left: 8px; font-family: Roboto, sans-serif; mask-image: linear-gradient(90deg, #000 105px, rgba(0, 0, 0, .6) 105px); }
.box-btn { width: 18px; color: #c4c4c4; }
.box-btn + .star { margin-left: 14px; }
.actions { display: flex; align-items: center; margin-left: 17px; gap: 18px; }
.actions button { width: 18px; }
.actions .ext { margin-left: 2px; }
.actions .bar { margin: 0 -1px 0 -3px; }
.bar { width: 2px; height: 16px; background: #000; }
.actions .avatar { width: 20px; height: 20px; margin: 0 -1px; border-radius: 50%; background: #b600b8; color: #fff; font-size: 11px; }
.bookmarks { display: flex; align-items: center; height: 30px; padding: 0 14px 0 12px; white-space: nowrap; margin-top: -1px; font-size: 15px; }
.bm { display: flex; align-items: center; gap: 7px; flex: none; }
.bm.bs { margin-left: 16px; width: 123px; }
.bm.cara { margin-left: 16px; gap: 6px; width: 138px; }
.bm.so { margin-left: 16px; width: 138px; gap: 6px; }
.overflow { margin-left: auto; }
.bookmarks .bar { margin: 0 15px 0 14px; }
.bm.all { gap: 7px; color: #e8e8e8; }
.bm.all svg { color: #a8a8a8; }

.pdf { display: flex; flex-direction: column; flex: 1; min-height: 0; }
.pdf-bar { display: flex; align-items: center; height: 56px; flex: none; padding: 0 24px; background: #323639; color: #f1f1f1; font-family: Roboto, sans-serif; font-size: 14px; position: relative; z-index: 1; box-shadow: 0 1px 6px rgba(0, 0, 0, .4); }
.menu { flex-direction: column; gap: 3px; width: 16px; }
.menu i { width: 16px; height: 2px; background: #f1f1f1; }
.pdf-title { font-weight: 500; margin-left: 24px; width: 132px; white-space: nowrap; }
.pdf-input { height: 20px; background: #191b1c; text-align: center; }
.page-no { width: 31px; }
.pages { margin-left: 5px; width: 52px; white-space: nowrap; }
.pdf-sep { width: 1px; height: 15px; background: #6f7274; }
.pdf-btn { width: 16px; }
.out { margin: 0 12px; }
.minus { width: 12px; height: 2px; background: #f1f1f1; }
.zoom { width: 45px; margin-right: 12px; }
.zoom + .pdf-btn { margin-right: 12px; }
.fit { margin: 0 16px 0 20px; }
.pdf-right { display: flex; gap: 20px; margin-left: auto; }
.pdf-view { display: flex; flex: 1; min-height: 0; background: #45484c; }
.sheet { flex: 1; min-width: 0; background: #fff; padding: 35px 92px 0 12px; overflow: hidden; margin-right: 5px; color: #231f20; font-family: Lato, sans-serif; }
.running { display: flex; align-items: center; height: 20px; font-size: 12px; }
.folio { font-family: "Liberation Serif", serif; width: 22px; letter-spacing: 1px; }
.tri { border: 3px solid transparent; border-left: 0; border-right: 6px solid #08bf4b; margin-right: 12px; }
.chapter { letter-spacing: 1px; }
.chart { width: 100%; height: auto; margin-top: 18px; }
.ct { font-family: Lato, sans-serif; font-size: 13px; fill: #d5f20a; }
.head { font-size: 15px; font-weight: 700; }
.legend { font-size: 14px; }
.val { font-weight: 700; }
.caption { margin: 13px 0 0; border-top: 2px solid #8fe5a6; padding-top: 4px; font-size: 14px; line-height: 19px; text-align: center; white-space: nowrap; }
.body { margin: 28px 0 0 18px; font: 15px/20px "Liberation Serif", serif; text-align-last: justify; white-space: nowrap; }
.vscroll { width: 15px; flex: none; background: #f1f1f1; display: flex; flex-direction: column; align-items: center; padding: 6px 0; }
.up, .down { border: 4px solid transparent; border-top: 0; border-bottom: 4px solid #505050; }
.down { border-bottom: 0; border-top: 4px solid #505050; margin-top: auto; }
.vthumb { width: 11px; height: 30px; margin-top: 53px; background: #c1c1c1; }
.hscroll { height: 15px; flex: none; display: flex; align-items: center; background: #f1f1f1; padding-left: 5px; }
.left, .right { border: 4px solid transparent; border-left: 0; border-right: 4px solid #505050; }
.right { border-right: 0; border-left: 4px solid #a3a3a3; margin: 0 5px 0 6px; }
.hthumb { flex: 1; height: 11px; margin-left: 76px; background: #c1c1c1; }
.corner { width: 15px; height: 15px; background: #dcdcdc; }

.docs { display: flex; flex-direction: column; flex: 1; min-height: 0; background: #f9fbfd; border-left: 1px solid #d8d8d8; color: #444746; font-family: Roboto, sans-serif; }
.doc-bar { display: flex; align-items: center; height: 40px; flex: none; margin: 6px 16px 0 15px; border-radius: 20px; background: #edf0f9; padding: 0 20px 0 19px; font-size: 15px; }
.d { width: 16px; margin-right: 16px; }
.search { margin-right: 18px; }
.doc-zoom { width: 42px; margin-left: 1px; font-size: 16px; }
.d.small { width: 24px; margin-right: 5px; }
.doc-sep { width: 1px; height: 20px; background: #c7c7c7; }
.styles { margin: 0 15px; gap: 10px; }
.dd { margin: 0 0 0 12px; }
.doc-right { display: flex; align-items: center; margin-left: auto; }
.doc-right .doc-sep { margin: 0 11px 0 26px; }
.doc-right .d { margin: 0; }
.mode { gap: 9px; }
.ruler { margin-top: 6px; }
.ruler text { font: 12px Roboto, sans-serif; fill: #5f6368; }
.doc-view { display: flex; flex: 1; min-height: 0; margin-top: -2px; overflow: hidden; }
.doc-page { flex: 1; min-width: 0; background: #fff; padding: 0 32px 0 83px; font: 16px/21px "Liberation Serif", serif; color: #000; }
.map { margin-left: 158px; }
.para { margin: 5px 0 0 24px; text-align: justify; }
.item { display: flex; }
.item + .para { margin-top: 1px; }
.item.gap { margin-top: 22px; }
.mark { width: 24px; }
.typo { text-decoration: underline wavy #d93025 1px; text-underline-offset: 2px; }
.doc-gutter { width: 16px; flex: none; padding: 325px 4px 0; }
.doc-gutter i { height: 58px; border-radius: 4px; background: #dadce0; }
.doc-hscroll { height: 16px; flex: none; padding: 4px 86px 0 128px; }
.doc-hscroll i { height: 8px; border-radius: 4px; background: #dadce0; }
</style>
